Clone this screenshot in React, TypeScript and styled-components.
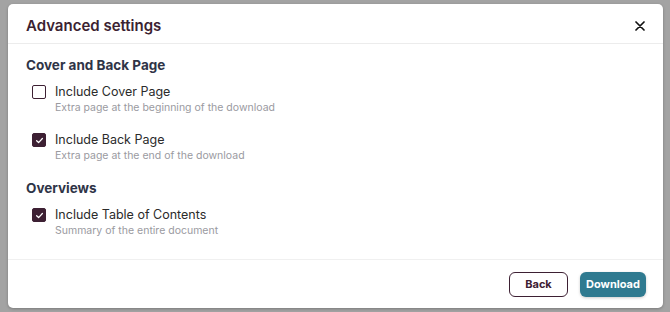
import styled, { createGlobalStyle } from "styled-components";

const GlobalStyle = createGlobalStyle`
  html, body {
    margin: 0;
    padding: 0;
    background: #a3a3a3;
    font-family: "Inter", "Lato", sans-serif;
  }
`;

const Backdrop = styled.div`
  width: 670px;
  height: 312px;
  box-sizing: border-box;
  padding: 4px 7px 4px 8px;
  background: #a3a3a3;
`;

const Modal = styled.div`
  width: 655px;
  height: 304px;
  background: #ffffff;
  border-radius: 5px;
  display: flex;
  flex-direction: column;
  box-shadow: 0 1px 3px rgba(0, 0, 0, 0.25);
  overflow: hidden;
`;

const Header = styled.div`
  height: 40px;
  display: flex;
  align-items: center;
  justify-content: space-between;
  padding: 4px 18px 0 18px;
  box-sizing: border-box;
  border-bottom: 1px solid #ececec;
  flex-shrink: 0;
`;

const Title = styled.h2`
  margin: 0;
  font-size: 15px;
  font-weight: 600;
  color: #3b2231;
`;

const CloseButton = styled.button`
  border: none;
  background: none;
  padding: 0;
  width: 10px;
  height: 10px;
  display: flex;
  align-items: center;
  justify-content: center;
  cursor: pointer;
`;

const Body = styled.div`
  flex: 1;
  padding: 13px 18px 0 18px;
  display: flex;
  flex-direction: column;
`;

const SectionTitle = styled.h3`
  margin: 0 0 11px 0;
  font-size: 13.5px;
  font-weight: 700;
  color: #2f3447;
  line-height: 16px;
`;

const Option = styled.label`
  display: flex;
  gap: 9px;
  padding-left: 6px;
  margin-bottom: 17px;
  cursor: pointer;
`;

const Box = styled.span<{ $checked: boolean }>`
  width: 14px;
  height: 14px;
  box-sizing: border-box;
  margin-top: 1px;
  border-radius: 2px;
  border: 1.5px solid #3d2033;
  background: ${({ $checked }) => ($checked ? "#3d2033" : "#ffffff")};
  display: flex;
  align-items: center;
  justify-content: center;
  flex-shrink: 0;
`;

const OptionText = styled.div`
  display: flex;
  flex-direction: column;
  gap: 1px;
`;

const OptionLabel = styled.span`
  font-size: 12.5px;
  color: #2b2b2b;
  line-height: 16px;
`;

const OptionHint = styled.span`
  font-size: 10.5px;
  color: #9a9a9f;
  line-height: 14px;
`;

const Group = styled.div`
  display: flex;
  flex-direction: column;
`;

const Footer = styled.div`
  height: 49px;
  border-top: 1px solid #f0f0f0;
  display: flex;
  align-items: center;
  justify-content: flex-end;
  gap: 12px;
  padding: 0 17px 0 0;
  box-sizing: border-box;
  flex-shrink: 0;
`;

const Button = styled.button<{ $primary?: boolean }>`
  height: 25px;
  width: ${({ $primary }) => ($primary ? "66px" : "59px")};
  box-sizing: border-box;
  border-radius: 6px;
  font-family: inherit;
  font-size: 11px;
  font-weight: 700;
  cursor: pointer;
  padding: 0;
  border: ${({ $primary }) => ($primary ? "none" : "1.5px solid #3d2033")};
  background: ${({ $primary }) => ($primary ? "#2f7a90" : "#ffffff")};
  color: ${({ $primary }) => ($primary ? "#ffffff" : "#3d2033")};
  box-shadow: ${({ $primary }) =>
    $primary ? "0 1px 3px rgba(0,0,0,0.2)" : "none"};
`;

function Check({ checked }: { checked: boolean }) {
  return (
    <Box $checked={checked}>
      {checked && (
        <svg width="9" height="9" viewBox="0 0 10 10">
          <path
            d="M1.8 5.2 L4 7.3 L8.2 2.8"
            fill="none"
            stroke="#ffffff"
            strokeWidth="1.4"
            strokeLinecap="round"
            strokeLinejoin="round"
          />
        </svg>
      )}
    </Box>
  );
}

const groups = [
  {
    title: "Cover and Back Page",
    options: [
      {
        label: "Include Cover Page",
        hint: "Extra page at the beginning of the download",
        checked: false,
      },
      {
        label: "Include Back Page",
        hint: "Extra page at the end of the download",
        checked: true,
      },
    ],
  },
  {
    title: "Overviews",
    options: [
      {
        label: "Include Table of Contents",
        hint: "Summary of the entire document",
        checked: true,
      },
    ],
  },
];

export default function App() {
  return (
    <>
      <GlobalStyle />
      <Backdrop>
        <Modal>
          <Header>
            <Title>Advanced settings</Title>
            <CloseButton aria-label="Close">
              <svg width="10" height="10" viewBox="0 0 10 10">
                <path
                  d="M1 1 L9 9 M9 1 L1 9"
                  stroke="#111"
                  strokeWidth="1.7"
                  strokeLinecap="round"
                />
              </svg>
            </CloseButton>
          </Header>
          <Body>
            {groups.map((g) => (
              <Group key={g.title}>
                <SectionTitle>{g.title}</SectionTitle>
                {g.options.map((o) => (
                  <Option key={o.label}>
                    <Check checked={o.checked} />
                    <OptionText>
                      <OptionLabel>{o.label}</OptionLabel>
                      <OptionHint>{o.hint}</OptionHint>
                    </OptionText>
                  </Option>
                ))}
              </Group>
            ))}
          </Body>
          <Footer>
            <Button>Back</Button>
            <Button $primary>Download</Button>
          </Footer>
        </Modal>
      </Backdrop>
    </>
  );
}
